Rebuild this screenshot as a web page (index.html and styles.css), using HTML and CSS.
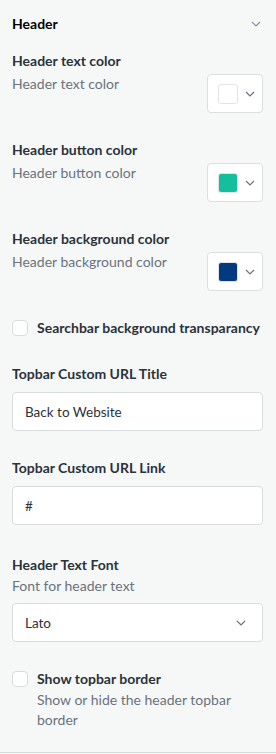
FILE: index.html
```html
<!DOCTYPE html>
<html lang="en">
<head>
    <meta charset="UTF-8">
    <meta name="viewport" content="width=device-width, initial-scale=1.0">
    <title>Header settings</title>
    <link rel="stylesheet" href="styles.css">
</head>
<body>

    <div class="panel">
        <div class="panel-head">
            <span class="panel-title">Header</span>
            <svg class="chevron" width="10" height="6" viewBox="0 0 10 6"><path d="M1 1l4 4 4-4" fill="none" stroke="#8a9099" stroke-width="1.2"/></svg>
        </div>

        <div class="field">
            <div class="label">Header text color</div>
            <div class="color-row">
                <div class="desc">Header text color</div>
                <div class="color-picker">
                    <span class="swatch" style="background:#ffffff"></span>
                    <svg class="chevron" width="10" height="6" viewBox="0 0 10 6"><path d="M1 1l4 4 4-4" fill="none" stroke="#6b7280" stroke-width="1.2"/></svg>
                </div>
            </div>
        </div>

        <div class="field">
            <div class="label">Header button color</div>
            <div class="color-row">
                <div class="desc">Header button color</div>
                <div class="color-picker">
                    <span class="swatch" style="background:#15bf9d"></span>
                    <svg class="chevron" width="10" height="6" viewBox="0 0 10 6"><path d="M1 1l4 4 4-4" fill="none" stroke="#6b7280" stroke-width="1.2"/></svg>
                </div>
            </div>
        </div>

        <div class="field">
            <div class="label">Header background color</div>
            <div class="color-row">
                <div class="desc">Header background color</div>
                <div class="color-picker">
                    <span class="swatch" style="background:#023a82"></span>
                    <svg class="chevron" width="10" height="6" viewBox="0 0 10 6"><path d="M1 1l4 4 4-4" fill="none" stroke="#6b7280" stroke-width="1.2"/></svg>
                </div>
            </div>
        </div>

        <div class="field check-field">
            <label class="check">
                <span class="box"></span>
                <span class="label">Searchbar background transparancy</span>
            </label>
        </div>

        <div class="field">
            <div class="label">Topbar Custom URL Title</div>
            <div class="input">Back to Website</div>
        </div>

        <div class="field field-wide">
            <div class="label">Topbar Custom URL Link</div>
            <div class="input">#</div>
        </div>

        <div class="field">
            <div class="label">Header Text Font</div>
            <div class="desc">Font for header text</div>
            <div class="input select">
                <span>Lato</span>
                <svg class="chevron" width="10" height="6" viewBox="0 0 10 6"><path d="M1 1l4 4 4-4" fill="none" stroke="#6b7280" stroke-width="1.2"/></svg>
            </div>
        </div>

        <div class="field check-field">
            <label class="check">
                <span class="box"></span>
                <span class="check-text">
                    <span class="label">Show topbar border</span>
                    <span class="desc">Show or hide the header topbar border</span>
                </span>
            </label>
        </div>
    </div>

</body>
</html>
```

FILE: styles.css
```css
body {
    font-family: Lato, "Open Sans", sans-serif;
    background-color: #f6f8f8;
    margin: 0;
    padding: 0;
}
.panel {
    padding: 0 13px 0 12px;
    height: 752px;
    border-bottom: 1px solid #d6dbdb;
    box-sizing: content-box;
}
.panel-head {
    display: flex;
    justify-content: space-between;
    align-items: center;
    padding: 13px 2px 15px 0;
    line-height: 22px;
}
.panel-title {
    font-size: 14px;
    font-weight: bold;
    color: #000;
}
.field {
    margin-bottom: 26px;
}
.field-wide {
    margin-bottom: 29px;
}
.label {
    font-size: 14px;
    font-weight: bold;
    color: #2b323a;
    line-height: 22px;
}
.desc {
    font-size: 14px;
    color: #6b727c;
    line-height: 20px;
}
.color-row {
    display: flex;
    justify-content: space-between;
    align-items: flex-start;
    margin-top: 2px;
}
.color-picker {
    display: flex;
    align-items: center;
    gap: 7px;
    width: 56px;
    height: 39px;
    box-sizing: border-box;
    padding-left: 10px;
    background: #fff;
    border: 1px solid #dcdfe0;
    border-radius: 4px;
}
.swatch {
    width: 20px;
    height: 20px;
    box-sizing: border-box;
    border: 1px solid #e2e5e6;
    border-radius: 3px;
}
.check-field {
    margin-bottom: 24px;
}
.check {
    display: flex;
    align-items: flex-start;
    gap: 9px;
}
.box {
    flex: none;
    width: 16px;
    height: 16px;
    margin-top: 3px;
    box-sizing: border-box;
    background: #fff;
    border: 1px solid #d8dcdc;
    border-radius: 4px;
}
.check-text {
    display: flex;
    flex-direction: column;
}
.input {
    display: flex;
    align-items: center;
    justify-content: space-between;
    height: 39px;
    margin-top: 7px;
    padding: 0 16px 0 12px;
    box-sizing: border-box;
    background: #fff;
    border: 1px solid #d8dcdc;
    border-radius: 4px;
    font-size: 13.5px;
    color: #2b323a;
}
.select {
    margin-top: 7px;
}
```
